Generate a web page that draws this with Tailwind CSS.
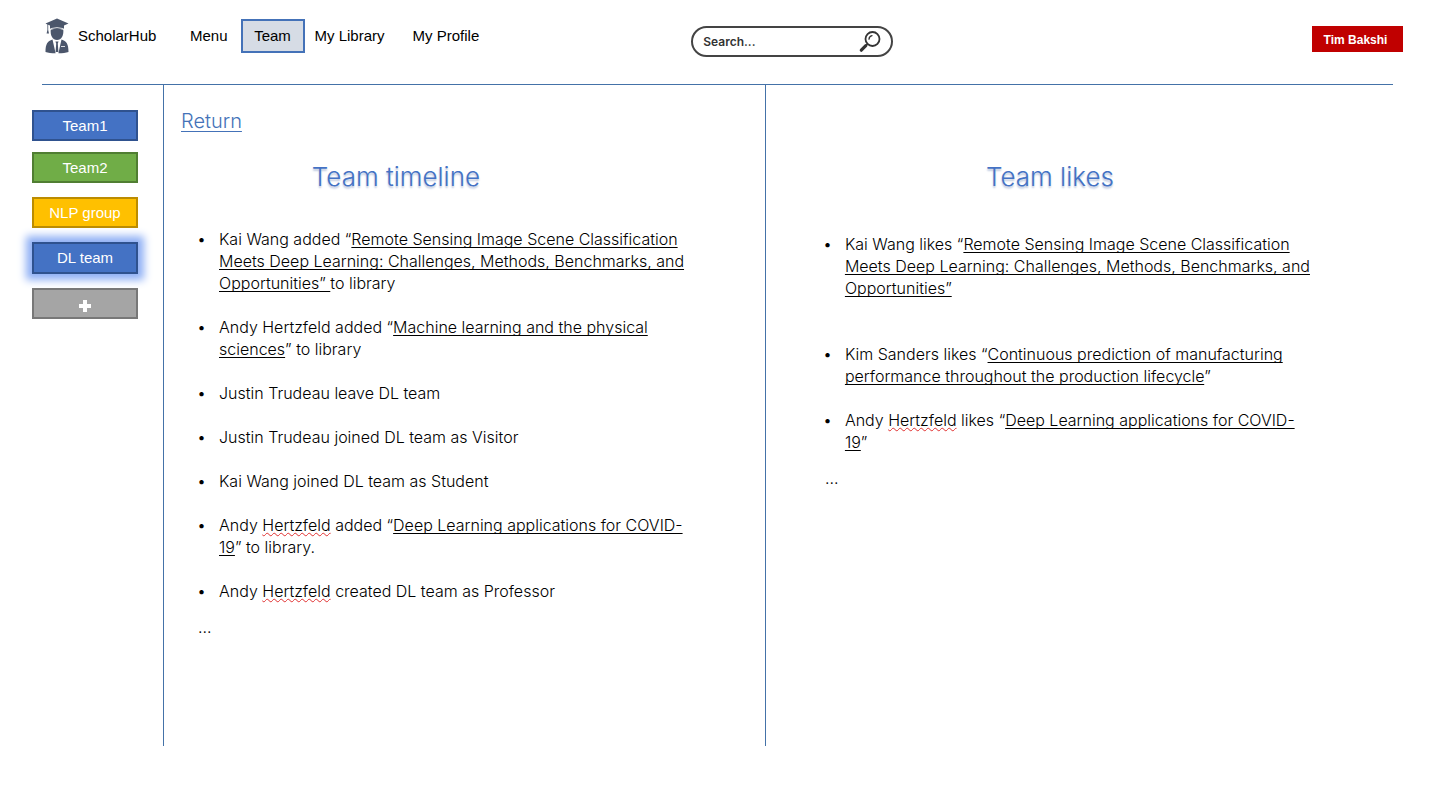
<!DOCTYPE html>
<html lang="en">
<head>
<meta charset="utf-8">
<meta name="viewport" content="width=device-width, initial-scale=1">
<title>ScholarHub – Team</title>
<script src="https://cdn.jsdelivr.net/npm/@tailwindcss/browser@4"></script>
</head>
<body class="min-h-screen bg-white font-['Liberation_Sans',Arial,sans-serif] text-[15px] text-black">
<header class="mr-11 ml-[42px] flex h-[84px] items-start pt-[18px]">
  <a href="#" class="flex h-9 w-[148px] shrink-0 items-center gap-2">
    <svg class="h-9 w-7" viewBox="0 0 28 36" fill="#4b566b" aria-hidden="true">
      <path d="M15 0.500 26.500 5.500 22 7.600V11H8V7.600L6.200 6.800V12l.8 3.500H4.600L5.400 12V6.500L3.500 5.500Z"/>
      <path d="M8.700 11.800Q15 9.600 21.300 11.800C21.800 17.500 19.500 22 15 22S8.200 17.500 8.700 11.800Z"/>
      <path d="M8.300 10.700Q15 8.500 21.700 10.700" fill="none" stroke="#fff" stroke-width=".8"/>
      <path d="M3.500 34C3.500 26 5.500 23.200 10.500 21.600L13.600 35.300C9.500 35.300 6 35 3.500 34ZM26.500 34C26.500 26 24.500 23.200 19.500 21.600L16.400 35.300C20.500 35.300 24 35 26.500 34Z"/>
      <path d="M13.400 23.500H16.600L15.800 25.500 16.400 34H13.600L14.200 25.500Z"/>
      <path d="M19 28.500H23" stroke="#fff" stroke-width=".8"/>
    </svg>
    <span>ScholarHub</span>
  </a>
  <nav class="flex h-9 items-center" aria-label="Main">
    <a href="#" class="mr-[13px]">Menu</a>
    <a href="#" aria-current="page" class="mr-2.5 flex h-[34px] w-16 items-center justify-center border-2 border-[#4472b8] bg-[#d6dce5]">Team</a>
    <a href="#" class="mr-7">My Library</a>
    <a href="#">My Profile</a>
  </nav>
  <form class="mt-2 ml-[212px] flex h-[31px] w-[202px] items-center rounded-full border-2 border-[#444] pr-2.5 pl-2.5" role="search">
    <input type="text" aria-label="Search" placeholder="Search..." class="min-w-0 flex-1 bg-transparent font-['Inter',sans-serif] text-[12px] font-semibold text-[#333] outline-none placeholder:text-[#333]">
    <button type="submit" aria-label="Search">
      <svg class="h-[22px] w-[22px]" viewBox="0 0 22 22" fill="none" stroke="#333" aria-hidden="true">
        <circle cx="13.500" cy="8" r="7" stroke-width="1.800"/>
        <path d="M10 8.200A3.800 3.800 0 0 1 13 4.700" stroke-width="1.300" stroke-linecap="round"/>
        <path d="M8.500 13 7 14.500" stroke-width="1.600"/>
        <path d="M6.800 14.700 2.300 19.200" stroke-width="3.200" stroke-linecap="round"/>
      </svg>
    </button>
  </form>
  <button type="button" class="mt-2 ml-auto h-[26px] w-[91px] bg-[#c00000] pt-px pr-1 text-[12px] font-bold text-white">Tim Bakshi</button>
</header>
<div class="mr-[54px] ml-[42px] h-px bg-[#4472a8]"></div>
<div class="flex min-h-[661px]">
  <aside class="flex w-[163px] shrink-0 flex-col items-start pt-[25px] pl-8 text-white">
    <button type="button" class="h-[31px] w-[106px] border-2 border-[#2f528f] bg-[#4472c4] pt-px">Team1</button>
    <button type="button" class="mt-[11px] h-[31px] w-[106px] border-2 border-[#507e32] bg-[#70ad47] pt-px">Team2</button>
    <button type="button" class="mt-3.5 h-[31px] w-[106px] border-2 border-[#bc8c00] bg-[#ffc000] pt-px">NLP group</button>
    <button type="button" aria-pressed="true" class="mt-3.5 h-8 w-[106px] border-2 border-[#2f528f] bg-[#4472c4] pt-px shadow-[0_0_8px_6px_#8fb0f5]">DL team</button>
    <button type="button" aria-label="Add team" class="mt-3.5 flex h-[31px] w-[106px] items-center justify-center border-2 border-[#787878] bg-[#a5a5a5]">
      <svg class="mt-1 h-3 w-3" viewBox="0 0 12 12" fill="none" stroke="#fff" stroke-width="4" aria-hidden="true"><path d="M6 0V12M0 6H12"/></svg>
    </button>
  </aside>
  <main class="flex flex-1 font-['Inter','Noto_Sans',sans-serif] text-[16px] leading-[22px] font-light">
    <div class="w-px shrink-0 bg-[#4472a8]"></div>
    <section class="w-[46.8%] pr-[50px] pl-[17px]">
      <a href="#" class="mt-[22px] block w-fit text-[20px] leading-7 text-[#4472b8] underline decoration-1 underline-offset-3">Return</a>
      <h1 class="mt-6 mr-[104px] text-center text-[26px] leading-9 text-[#4472c4] text-shadow-[0_2px_2px_#b8c4dc]">Team timeline</h1>
      <ul class="mt-[33px] ml-[17px] flex list-['•'] flex-col gap-[22px] pl-[8px] [&_a]:underline [&_a]:decoration-1 [&_a]:underline-offset-2 [&_a]:[text-decoration-skip-ink:none] [&_li]:pl-[13px]">
        <li>Kai Wang added “<a href="#">Remote Sensing Image Scene Classification Meets Deep Learning: Challenges, Methods, Benchmarks, and Opportunities” </a>to library</li>
        <li>Andy Hertzfeld added “<a href="#">Machine learning and the physical sciences</a>” to library</li>
        <li>Justin Trudeau leave DL team</li>
        <li>Justin Trudeau joined DL team as Visitor</li>
        <li>Kai Wang joined DL team as Student</li>
        <li>Andy <span class="underline decoration-[#e03030] decoration-wavy decoration-1 underline-offset-1">Hertzfeld</span> added “<a href="#">Deep Learning applications for COVID-<br>19</a>” to library.</li>
        <li>Andy <span class="underline decoration-[#e03030] decoration-wavy decoration-1 underline-offset-1">Hertzfeld</span> created DL team as Professor</li>
      </ul>
      <p class="mt-3.5 ml-[17px]">...</p>
    </section>
    <div class="w-px shrink-0 bg-[#4472a8]"></div>
    <section class="flex-1 pr-[110px] pl-[59px]">
      <h2 class="mt-[74px] mr-[62px] text-center text-[26px] leading-9 text-[#4472c4] text-shadow-[0_2px_2px_#b8c4dc]">Team likes</h2>
      <ul class="mt-[38px] flex list-['•'] flex-col gap-[22px] pl-[7px] [&_a]:underline [&_a]:decoration-1 [&_a]:underline-offset-2 [&_a]:[text-decoration-skip-ink:none] [&_li]:pl-[13px]">
        <li class="mb-[22px]">Kai Wang likes “<a href="#">Remote Sensing Image Scene Classification Meets Deep Learning: Challenges, Methods, Benchmarks, and Opportunities”</a></li>
        <li>Kim Sanders likes “<a href="#">Continuous prediction of manufacturing performance throughout the production lifecycle</a>”</li>
        <li>Andy <span class="underline decoration-[#e03030] decoration-wavy decoration-1 underline-offset-1">Hertzfeld</span> likes “<a href="#">Deep Learning applications for COVID-<br>19</a>”</li>
      </ul>
      <p class="mt-3.5">...</p>
    </section>
  </main>
</div>
</body>
</html>
